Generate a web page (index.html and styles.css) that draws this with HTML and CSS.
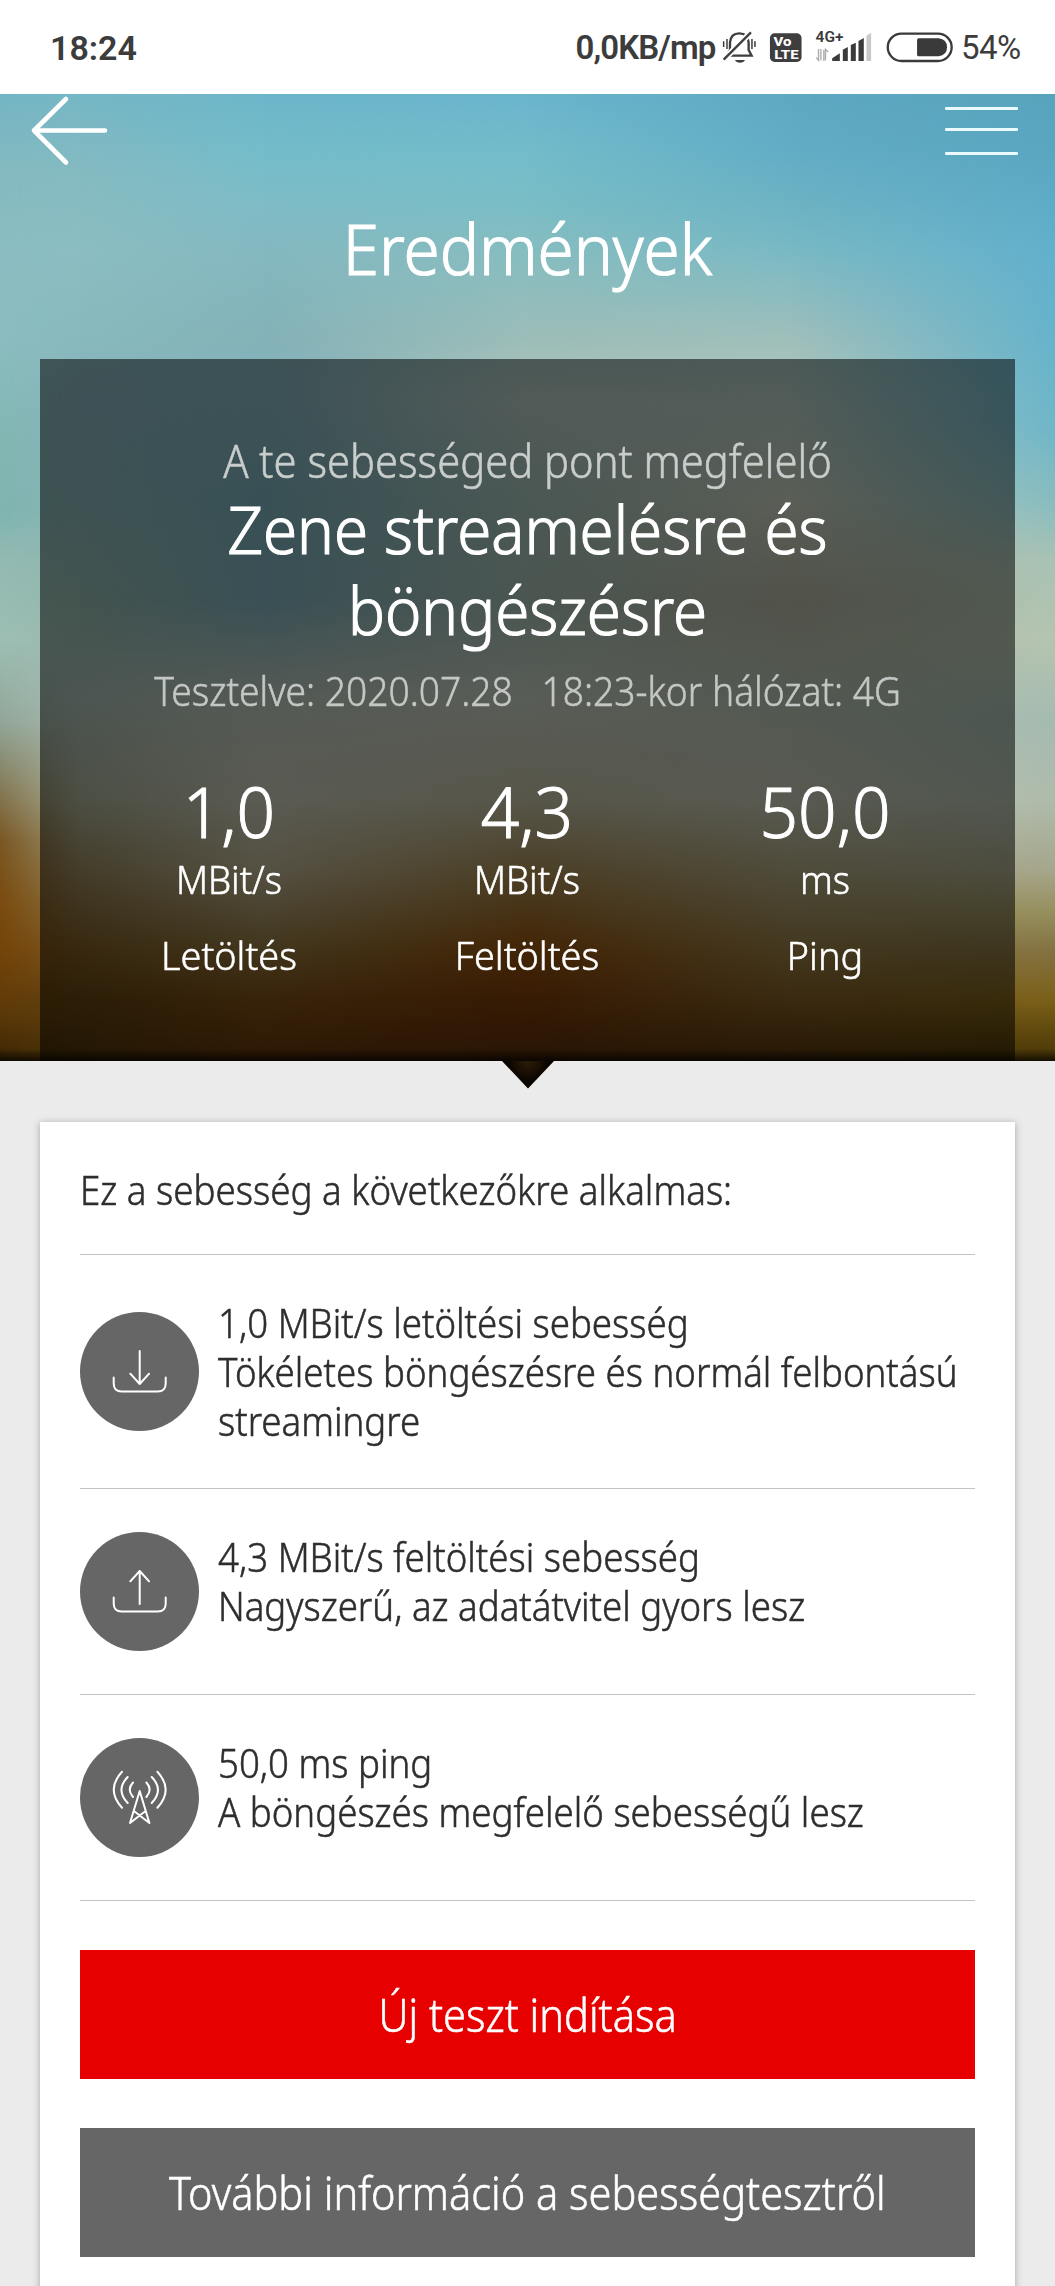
FILE: index.html
```html
<!DOCTYPE html>
<html lang="hu">
<head>
<meta charset="utf-8">
<title>Eredmények</title>
<link rel="stylesheet" href="styles.css">
</head>
<body>
<div class="status">
  <span class="clock">18:24</span>
  <span class="rate">0,0KB/mp</span>
  <svg class="status-icons" viewBox="480 80 700 120">
    <g fill="none" stroke="#3e3e3e" stroke-width="7">
      <path d="M500 166h72l-9-17v-22q-2-28-28-28q-26 0-28 28v22l-10 20"/>
      <path d="M488 178L570 96" stroke="#fff" stroke-width="18"/>
      <path d="M488 178L570 96"/>
      <path d="M488 123v17M498 116v30M573 116v30M582 123v17" stroke-width="4.500"/>
    </g>
    <path d="M522 179h30q-4 8-15 8t-15-8z" fill="#3e3e3e"/>
    <rect x="627" y="99" width="95" height="86" rx="14" fill="#3e3e3e"/>
    <g class="badge-text" fill="#fff"><text x="638" y="137" font-size="39" textLength="54" lengthAdjust="spacingAndGlyphs">Vo</text><text x="640" y="175" font-size="39" textLength="73" lengthAdjust="spacingAndGlyphs">LTE</text></g>
    <text class="net-text" x="764" y="126" font-size="46" textLength="84" lengthAdjust="spacingAndGlyphs">4G+</text>
    <path d="M773 146v34l-7-8M780 146v34M789 182v-34M794 180v-33l8 8" fill="none" stroke="#aaa" stroke-width="4"/>
    <g fill="#3a3a3a">
      <path d="M814 182v-8l23-15v23zM846 182v-34l15-8v42zM870 182v-48l15-7v55zM893 182v-60l16-9v69z"/>
      <path d="M917 182v-76l14-9v85z" fill="#c9c9c9"/>
    </g>
    <rect x="981" y="100" width="192" height="82" rx="41" fill="none" stroke="#3a3a3a" stroke-width="7"/>
    <path d="M1074 114h60q25 3 25 27t-25 27h-60q-5 0-5-5v-44q0-5 5-5z" fill="#3a3a3a"/>
  </svg>
  <span class="battery">54%</span>
</div>

<header class="hero">
  <div class="sky sky-1"></div>
  <div class="sky sky-2"></div>
  <div class="sky sky-3"></div>
  <div class="sky sky-4"></div>
  <div class="sky sky-5"></div>
  <div class="sky sky-6"></div>
  <div class="hero-body">
    <nav class="nav">
      <svg class="back" viewBox="0 0 80 72"><path d="M38 5L6 36.500L38 68.500M6 36.500H77" fill="none" stroke="#fff" stroke-width="4.600" stroke-linecap="round" stroke-linejoin="round"/></svg>
      <div class="menu"><i></i><i></i><i></i></div>
    </nav>
    <h1 class="title">Eredmények</h1>
    <section class="panel">
      <p class="lead">A te sebességed pont megfelelő</p>
      <h2 class="verdict">Zene streamelésre és<br>böngészésre</h2>
      <p class="tested">Tesztelve: 2020.07.28 &nbsp; 18:23-kor hálózat: 4G</p>
      <div class="stats">
        <div><b>1,0</b><span>MBit/s</span><span class="label">Letöltés</span></div>
        <div><b>4,3</b><span>MBit/s</span><span class="label">Feltöltés</span></div>
        <div><b>50,0</b><span>ms</span><span class="label">Ping</span></div>
      </div>
    </section>
  </div>
  <svg class="notch" viewBox="0 0 52 28">
    <defs>
      <radialGradient id="notch-fill" gradientUnits="userSpaceOnUse" cx="26" cy="0" r="22">
        <stop offset="0" stop-color="#2c1b08"/><stop offset=".5" stop-color="#1b1004"/><stop offset="1" stop-color="#060300"/>
      </radialGradient>
    </defs>
    <path d="M0 0H52L26 27.500z" fill="url(#notch-fill)"/>
  </svg>
</header>

<main class="card">
  <h3 class="heading"><span>Ez a sebesség a következőkre alkalmas:</span></h3>
  <div class="row">
    <svg class="icon" viewBox="10 12 119 119"><path d="M43.700 77.500v6q0 8 8 8h36q8 0 8-8v-6M69.700 51v33M60.300 73.700L69.700 84L79.100 73.700"/></svg>
    <p>1,0 MBit/s letöltési sebesség<br>Tökéletes böngészésre és normál felbontású<br>streamingre</p>
  </div>
  <div class="row">
    <svg class="icon" viewBox="10 12 119 119"><path d="M43.700 77.500v6q0 8 8 8h36q8 0 8-8v-6M69.700 84V51M60.300 61.300L69.700 51L79.100 61.300"/></svg>
    <p>4,3 MBit/s feltöltési sebesség<br>Nagyszerű, az adatátvitel gyors lesz</p>
  </div>
  <div class="row">
    <svg class="icon" viewBox="10 13 119 119"><path d="M60 98L69.700 66L79.400 98L64.500 86.500M60 98L74.900 86.500M63 57.500q-6.500 7 0 14.500M57.700 52q-12.500 13 0 26M52 46.700q-16.500 18 0 36M76.400 57.500q6.500 7 0 14.500M81.700 52q12.500 13 0 26M87.400 46.700q16.500 18 0 36"/></svg>
    <p>50,0 ms ping<br>A böngészés megfelelő sebességű lesz</p>
  </div>
  <a class="button primary"><span>Új teszt indítása</span></a>
  <a class="button"><span>További információ a sebességtesztről</span></a>
</main>
</body>
</html>
```
FILE: styles.css
```css
* { box-sizing: border-box; }

body {
  margin: 0;
  width: 1055px;
  height: 2286px;
  overflow: hidden;
  background: #ebebeb;
  color: #2e2e2e;
  font-family: "Noto Sans", sans-serif;
  font-weight: 300;
}

h1, h2, h3, p { margin: 0; font-weight: inherit; white-space: nowrap; }

/* The light face is slightly thickened to a weight between light and regular. */
.hero-body, .card { -webkit-text-stroke: .55px currentColor; }

.status {
  display: flex;
  align-items: flex-start;
  height: 94px;
  padding: 28px 0 0 50px;
  background: #fff;
  color: #3c3c3c;
  font: 33px/40px Roboto, sans-serif;
}
.clock { width: 525.500px; font-size: 34px; font-weight: 600; }
.rate { width: 144.500px; font-weight: 600; letter-spacing: -.9px; white-space: nowrap; }
.status-icons { width: 233px; height: 40px; margin: -1px 0 0 1px; font-family: Roboto, sans-serif; }
.badge-text { font-weight: 800; }
.net-text { font-weight: 600; fill: #3a3a3a; }
.battery { margin-left: 7px; letter-spacing: -.5px; }

.hero { position: relative; height: 967px; }
.hero-body { position: relative; height: 967px; overflow: hidden; }
.hero::after {
  content: "";
  position: absolute;
  inset: auto 0 0;
  height: 12px;
  background: linear-gradient(transparent, rgba(0, 0, 0, .75));
}

/* Vertical colour ramps, each faded in from its left-hand neighbour. */
.sky { position: absolute; inset: 0; }
.sky-1 { background: linear-gradient(#74b5c4 0, #84bac0 76px, #8bbdc2 156px, #8bbdc0 246px, #82b8b4 336px, #7fb5b0 416px, #93bab2 466px, #9dbfb4 546px, #92a79a 626px, #86805f 686px, #7a5724 746px, #7a4c10 806px, #744409 856px, #5e3a08 916px, #402806 960px); }
.sky-2 {
  background: linear-gradient(#76b7c5 0, #84bac1 76px, #8bbdc2 156px, #88b9bc 246px, #89b2bb 306px, #89b4b7 406px, #92b7ac 506px, #a7bbb2 606px, #a7ac94 706px, #94855b 776px, #7a5723 856px, #604111 906px, #503609 956px);
  mask-image: linear-gradient(90deg, transparent 0, #000 80px);
}
.sky-3 {
  background: linear-gradient(#6cb6ca 0, #74bcca 56px, #7dbcc6 106px, #84b8c0 156px, #84b2b8 246px, #82b2bd 306px, #7aaeb9 406px, #7eaeba 506px, #b9c4b9 606px, #c4c6b4 706px, #b9b092 776px, #8d753d 856px, #7a4c16 906px, #66380d 956px);
  mask-image: linear-gradient(90deg, transparent 80px, #000 264px);
}
.sky-4 {
  background: linear-gradient(#6ab4cc 0, #73bccb 56px, #79bdc6 106px, #86bdc0 156px, #9cbdb8 246px, #b2c6bf 306px, #a3bfb7 406px, #a3bbb0 506px, #c1cabd 606px, #bdbba1 706px, #a58b53 776px, #92500d 856px, #783b09 906px, #5d300b 956px);
  mask-image: linear-gradient(90deg, transparent 264px, #000 528px);
}
.sky-5 {
  background: linear-gradient(#5ea9c2 0, #62adc5 56px, #6cb2c4 106px, #79b9c4 156px, #a0bfba 246px, #b2c8bf 306px, #c4ccbb 406px, #b2b4a1 506px, #b4c1b0 606px, #c1c4b2 706px, #aca580 776px, #927a43 856px, #7e5b25 906px, #5d3b0f 956px);
  mask-image: linear-gradient(90deg, transparent 528px, #000 791px);
}
.sky-6 {
  background: linear-gradient(#58a3bc 0, #5aa6c0 56px, #5dabc6 106px, #62b0cc 156px, #66b3cb 246px, #6fb6c8 336px, #86bcc0 406px, #a8c2b4 466px, #b4c4b0 546px, #a4bab0 626px, #aebbab 706px, #a5a68c 776px, #96905f 816px, #837242 856px, #7a6018 906px, #4f3c08 956px);
  mask-image: linear-gradient(90deg, transparent 791px, #000 1055px);
}

.nav { display: flex; justify-content: space-between; height: 120px; padding: 0 37px 0 28px; }
.back { width: 80px; height: 72px; }
.menu { display: grid; grid-template-rows: 21px 24px 3px; width: 73px; height: 48px; margin-top: 13px; }
.menu i { height: 3px; border-radius: 1px; background: #e9fbff; }

.title { height: 69px; color: #fff; font-size: 69px; line-height: 69px; text-align: center; transform: scaleX(.95); -webkit-text-stroke-width: 1.2px; }

.panel {
  height: 703px;
  margin: 75.500px 40px 0;
  padding: 78px 40px 0;
  background: rgba(0, 0, 0, .54);
  color: #fff;
  text-align: center;
}
.lead { color: #c9cdcc; font-size: 45px; line-height: 48px; transform: scaleX(.927); }
.verdict { margin-top: 3px; font-size: 67px; line-height: 81px; transform: scaleX(.922); -webkit-text-stroke-width: 1.2px; }
.tested { margin-top: 16px; color: #c4c7c4; font-size: 41px; line-height: 48px; transform: scaleX(.906); }
.stats { display: grid; grid-template-columns: repeat(3, 298px); margin-top: 57px; }
.stats div { display: grid; }
.stats b { height: 84px; font-size: 70px; font-weight: inherit; line-height: 80px; transform: scaleX(.965); -webkit-text-stroke-width: 1px; }
.stats span { font-size: 39px; line-height: 48px; transform: scaleX(.94); }
.stats .label { margin-top: 28px; transform: scaleX(.97); }

.notch { position: absolute; left: 502px; top: 966.500px; width: 52px; height: 28px; }

.card {
  height: 1200px;
  margin: 60.500px 40px 0;
  padding: 43.500px 40px 0;
  background: #fff;
  box-shadow: 0 1px 7px rgba(0, 0, 0, .3);
}
.heading { height: 90px; border-bottom: 1px solid #c4c4c4; font-size: 40px; line-height: 49px; }
.heading span { display: block; transform: scaleX(.918); transform-origin: 0 50%; }
.row { display: flex; align-items: center; gap: 19px; padding: 42.500px 0 43.500px; border-bottom: 1px solid #c4c4c4; }
.row p { min-height: 119px; font-size: 40px; line-height: 49px; transform: scaleX(.916); transform-origin: 0 50%; }
.icon { flex: none; width: 119px; height: 119px; border-radius: 50%; background: #666; fill: none; stroke: #fff; stroke-width: 2; stroke-linecap: round; stroke-linejoin: round; }

.button { display: flex; align-items: center; justify-content: center; height: 129px; margin-top: 49px; background: #666; color: #fff; font-size: 45px; white-space: nowrap; }
.button span { transform: scaleX(.923); }
.primary { background: #e60000; }
```
